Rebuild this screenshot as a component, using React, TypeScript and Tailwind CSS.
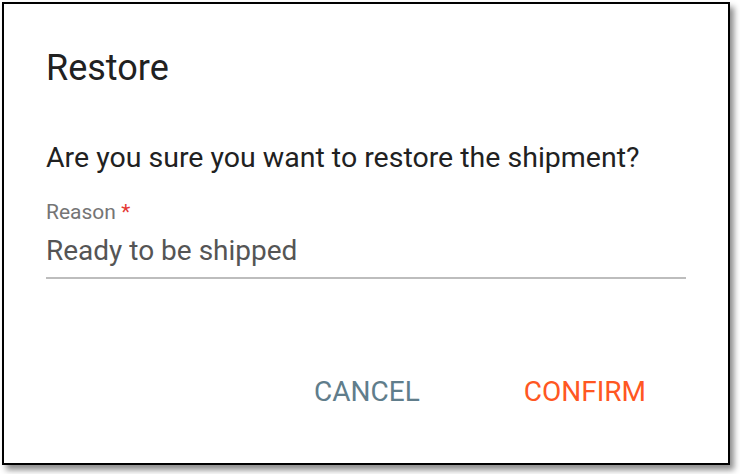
export default function App() {
  return (
    <div className="h-[474px] w-[740px] bg-white pl-[2px] pt-[2px] font-['Roboto',sans-serif]">
      <div className="flex h-[463px] w-[728px] flex-col border-2 border-black bg-white shadow-[4px_5px_6px_rgba(0,0,0,0.45)]">
        <h2 className="mt-[42px] pl-[42px] text-[36px] leading-[44px] text-[#212121]">Restore</h2>
        <p className="mt-[51px] pl-[42px] text-[28.5px] leading-[34px] text-[#212121]">
          Are you sure you want to restore the shipment?
        </p>
        <div className="mt-[24px] ml-[42px] mr-[42px] border-b-2 border-[#bdbdbd] pb-[9px]">
          <label className="block text-[21px] leading-[26px] text-[#757575]">
            Reason <span className="text-[#e53935]">*</span>
          </label>
          <div className="mt-[9px] text-[28px] leading-[34px] text-[#555555]">Ready to be shipped</div>
        </div>
        <div className="mt-auto flex justify-end gap-[104px] pb-[55px] pr-[82px]">
          <button className="text-[28px] leading-[32px] text-[#607d8b]">CANCEL</button>
          <button className="text-[28px] leading-[32px] text-[#ff5722]">CONFIRM</button>
        </div>
      </div>
    </div>
  )
}
